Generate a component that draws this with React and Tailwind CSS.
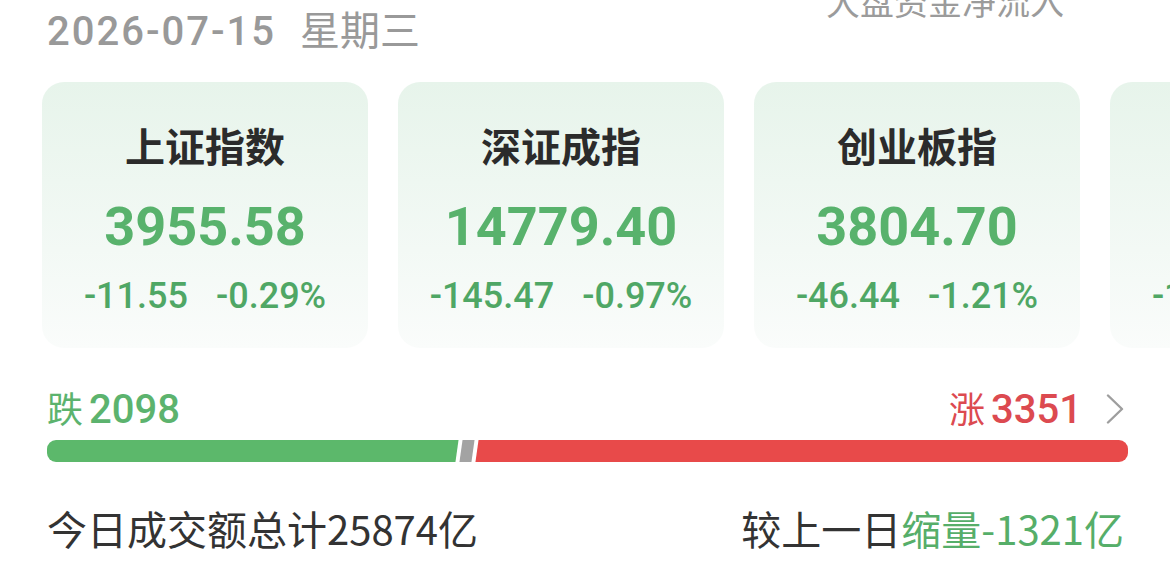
import React from "react";

const indices = [
  { name: "上证指数", price: "3955.58", change: "-11.55", pct: "-0.29%" },
  { name: "深证成指", price: "14779.40", change: "-145.47", pct: "-0.97%" },
  { name: "创业板指", price: "3804.70", change: "-46.44", pct: "-1.21%" },
  { name: "科创50", price: "1092.36", change: "-12.35", pct: "-1.12%" },
];

const breadth = { down: 2098, up: 3351 };

function Chevron() {
  return (
    <svg width="18" height="30" viewBox="0 0 18 30" fill="none" stroke="#9e9e9e" strokeWidth="2.4" strokeLinecap="round" strokeLinejoin="round">
      <path d="M2 1.5 L16 15 L2 28.5" />
    </svg>
  );
}

function IndexCard({ item }) {
  return (
    <div className="flex h-[266px] w-[326px] shrink-0 flex-col items-center rounded-[22px] bg-linear-to-b from-[#e7f4eb] to-[#fafcfb] pt-[43px]">
      <div className="font-['Noto_Sans_CJK_SC',sans-serif] text-[40px] leading-[40px] font-bold text-[#2b2b2b]">
        {item.name}
      </div>
      <div className="mt-[35px] font-['Roboto','Noto_Sans_CJK_SC',sans-serif] text-[54px] leading-[54px] font-bold text-[#58b26c]">
        {item.price}
      </div>
      <div className="mt-[24px] flex gap-[28px] font-['Roboto','Noto_Sans_CJK_SC',sans-serif] text-[36px] leading-[36px] font-medium text-[#4fa765]">
        <span>{item.change}</span>
        <span>{item.pct}</span>
      </div>
    </div>
  );
}

export default function App() {
  const downShare = (breadth.down / (breadth.down + breadth.up)) * 100;

  return (
    <div className="h-[571px] w-[1170px] overflow-hidden bg-white">
      {/* section title, scrolled mostly out of view */}
      <div className="flex h-0 justify-end pr-[106px]">
        <span className="-mt-[16px] font-['Noto_Sans_CJK_SC',sans-serif] text-[34px] leading-[34px] text-[#9b9b9b]">
          大盘资金净流入
        </span>
      </div>

      {/* date */}
      <div className="mt-[8px] flex items-baseline gap-[24px] pl-[47px] leading-[40px] text-[#999999]">
        <span className="font-['Roboto',sans-serif] text-[40px] font-medium tracking-[2px]">2026-07-15</span>
        <span className="font-['Noto_Sans_CJK_SC',sans-serif] text-[40px]">星期三</span>
      </div>

      {/* index cards */}
      <div className="mt-[30px] flex gap-[30px] pl-[42px]">
        {indices.map((item) => (
          <IndexCard key={item.name} item={item} />
        ))}
      </div>

      <div className="pl-[47px] pr-[42px]">
        {/* up / down counts */}
        <div className="mt-[36px] flex items-baseline justify-between leading-[46px]">
          <div className="flex items-baseline text-[#5cb36e]">
            <span className="font-['Noto_Sans_CJK_SC',sans-serif] text-[36px]">跌</span>
            <span className="ml-[6px] font-['Roboto',sans-serif] text-[40px] font-medium">
              {breadth.down}
            </span>
          </div>
          <div className="flex items-baseline text-[#dc4a50]">
            <span className="font-['Noto_Sans_CJK_SC',sans-serif] text-[36px]">涨</span>
            <span className="ml-[6px] font-['Roboto',sans-serif] text-[40px] font-medium">
              {breadth.up}
            </span>
            <span className="mr-[4px] ml-[24px] self-center">
              <Chevron />
            </span>
          </div>
        </div>

        {/* ratio bar */}
        <div className="mt-[7px] flex h-[22px] gap-[4px] overflow-hidden rounded-[9px]">
          <div className="-ml-[6px] shrink-0 -skew-x-8 bg-[#5cb86b]" style={{ width: `${downShare}%` }} />
          <div className="w-[12px] shrink-0 -skew-x-8 bg-[#a3a3a3]" />
          <div className="-mr-[6px] flex-1 -skew-x-8 bg-[#e84a4a]" />
        </div>

        {/* turnover */}
        <div className="mt-[46px] flex justify-between pr-[4px] font-['Noto_Sans_CJK_SC',sans-serif] text-[40px] leading-[40px] text-[#333333]">
          <span>今日成交额总计25874亿</span>
          <span>
            较上一日<span className="text-[#56ae69]">缩量-1321亿</span>
          </span>
        </div>
      </div>
    </div>
  );
}
